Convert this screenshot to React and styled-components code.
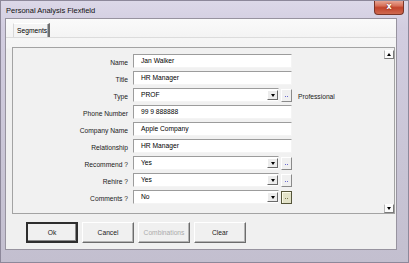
import React from "react";
import styled, { createGlobalStyle } from "styled-components";

const Global = createGlobalStyle`
  html, body { margin: 0; padding: 0; background: #ffffff; }
  body { font-family: "Liberation Sans", Arial, sans-serif; }
  * { box-sizing: border-box; }
`;

const Window = styled.div`
  width: 409px;
  height: 263px;
  display: flex;
  flex-direction: column;
  background: linear-gradient(180deg, #dcd8e8 0%, #d2cde0 10%, #c9c5d6 60%, #c3bfcf 100%);
  border: 1px solid #8d889a;
  overflow: hidden;
`;

const TitleBar = styled.div`
  height: 17px;
  display: flex;
  align-items: flex-start;
  justify-content: space-between;
  padding: 0 4px 0 5px;
`;

const Title = styled.span`
  font-size: 7.5px;
  line-height: 19px;
  color: #111;
`;

const CloseButton = styled.div`
  width: 30px;
  height: 15px;
  margin-top: -1px;
  display: flex;
  align-items: center;
  justify-content: center;
  border: 1px solid #7a3528;
  border-top: none;
  border-radius: 0 0 4px 4px;
  background: linear-gradient(180deg, #eab0a0 0%, #d8735c 40%, #c2442c 55%, #cf6a50 100%);
  color: #fff;
  font-family: "DejaVu Sans", sans-serif;
  font-weight: bold;
  font-size: 8px;
  line-height: 1;
  text-shadow: 0 0 2px #6a1a10;
`;

const Client = styled.div`
  flex: 1;
  margin: 0 11px 12px 4px;
  border: 1px solid #97939f;
  background: #f0f0f0;
  display: flex;
  flex-direction: column;
`;

const TabStrip = styled.div`
  display: flex;
  padding: 4px 0 0 7px;
  background: linear-gradient(180deg, #fafafa, #f4f4f4);
`;

const Tab = styled.div`
  height: 14px;
  width: 37px;
  padding-left: 3px;
  font-size: 6.7px;
  line-height: 13px;
  color: #000;
  background: #f4f4f4;
  border-top: 1px solid #ffffff;
  border-left: 1px solid #d8d8d8;
  border-right: 2px solid #6e6e6e;
  box-shadow: inset -1px 0 0 #b0b0b0;
`;

const TabPage = styled.div`
  flex: 1;
  display: flex;
  flex-direction: column;
  border-top: 1px solid #dcdcdc;
  background: linear-gradient(180deg, #f6f6f6 0px, #f4f4f4 10px, #f0f0f0 11px);
`;

const Panel = styled.div`
  margin: 9px 1px 0 6px;
  height: 167px;
  border: 1px solid #a3a3a3;
  background: #f1f1f1;
  display: flex;
`;

const Form = styled.div`
  flex: 1;
  display: flex;
  flex-direction: column;
  gap: 3px;
  padding-top: 6px;
`;

const Row = styled.div`
  display: flex;
  align-items: center;
  height: 14px;
`;

const Label = styled.div`
  width: 120px;
  padding-right: 5px;
  padding-top: 3px;
  text-align: right;
  font-size: 6.7px;
  color: #1a1a1a;
`;

const Field = styled.div`
  position: relative;
  width: ${(p) => (p.$combo ? 146 : 159)}px;
  height: 14px;
  padding-left: 7px;
  background: #ffffff;
  border-top: 1px solid #9c9c9c;
  border-left: 1px solid #9c9c9c;
  border-right: 1px solid #f4f4f4;
  border-bottom: 1px solid #f4f4f4;
  font-size: 6.7px;
  line-height: 12px;
  color: #000;
`;

const DropArrow = styled.div`
  position: absolute;
  right: 0;
  top: 1px;
  width: 11px;
  height: 10px;
  background: #ececec;
  border-top: 1px solid #fff;
  border-left: 1px solid #fff;
  border-right: 1px solid #6a6a6a;
  border-bottom: 1px solid #6a6a6a;
  display: flex;
  align-items: center;
  justify-content: center;
`;

const Tri = styled.div`
  width: 0;
  height: 0;
  border-left: 2.5px solid transparent;
  border-right: 2.5px solid transparent;
  ${(p) => (p.$up ? "border-bottom: 3px solid #000;" : "border-top: 3px solid #000;")}
`;

const Ellipsis = styled.div`
  margin-left: 2px;
  width: 11px;
  height: 13px;
  display: flex;
  align-items: center;
  justify-content: center;
  gap: 1px;
  background: ${(p) => (p.$focus ? "#e2e2c8" : "#f0f0f0")};
  border: 1px solid;
  border-color: ${(p) =>
    p.$focus ? "#55553a" : "#ffffff #8a8a8a #8a8a8a #ffffff"};
  box-shadow: ${(p) => (p.$focus ? "inset 1px 1px 0 #fafae8" : "none")};
`;

const Dot = styled.span`
  width: 1px;
  height: 1px;
  margin-top: 3px;
  background: ${(p) => (p.$focus ? "#7a7a50" : "#6a6ad0")};
`;

const Note = styled.span`
  margin-left: 6px;
  font-size: 6.7px;
  color: #1a1a1a;
  padding-top: 2px;
`;

const ScrollBar = styled.div`
  width: 11px;
  display: flex;
  flex-direction: column;
  justify-content: space-between;
  align-items: flex-end;
  padding-top: 2px;
`;

const ScrollArrow = styled.div`
  width: 10px;
  height: 9px;
  background: #fbfbfb;
  border-top: 1px solid #fff;
  border-left: 1px solid #b8b8b8;
  border-right: 1px solid #7a7a7a;
  border-bottom: 1px solid #7a7a7a;
  display: flex;
  align-items: center;
  justify-content: center;
`;

const Buttons = styled.div`
  display: flex;
  gap: 4px;
  margin-top: 8px;
  padding-left: 20px;
`;

const Button = styled.div`
  width: 52px;
  height: 21px;
  display: flex;
  align-items: center;
  justify-content: center;
  font-size: 6.7px;
  color: ${(p) => (p.$disabled ? "#ababab" : "#1a1a1a")};
  background: #f0f0f0;
  border: ${(p) => (p.$default ? "2px solid #2e2e2e" : "1px solid")};
  border-color: ${(p) =>
    p.$default ? "#2e2e2e" : "#ffffff #6c6c6c #6c6c6c #ffffff"};
  box-shadow: ${(p) =>
    p.$default ? "inset -1px -1px 0 #8a8a8a" : "inset -1px -1px 0 #b4b4b4"};
`;

const rows = [
  { label: "Name", value: "Jan Walker" },
  { label: "Title", value: "HR Manager" },
  { label: "Type", value: "PROF", combo: true, note: "Professional" },
  { label: "Phone Number", value: "99 9 888888" },
  { label: "Company Name", value: "Apple Company" },
  { label: "Relationship", value: "HR Manager" },
  { label: "Recommend ?", value: "Yes", combo: true },
  { label: "Rehire ?", value: "Yes", combo: true },
  { label: "Comments ?", value: "No", combo: true, focus: true },
];

export default function App() {
  return (
    <>
      <Global />
      <Window>
        <TitleBar>
          <Title>Personal Analysis Flexfield</Title>
          <CloseButton>x</CloseButton>
        </TitleBar>
        <Client>
          <TabStrip>
            <Tab>Segments</Tab>
          </TabStrip>
          <TabPage>
            <Panel>
              <Form>
                {rows.map((r) => (
                  <Row key={r.label}>
                    <Label>{r.label}</Label>
                    <Field $combo={r.combo}>
                      {r.value}
                      {r.combo && (
                        <DropArrow>
                          <Tri />
                        </DropArrow>
                      )}
                    </Field>
                    {r.combo && (
                      <Ellipsis $focus={r.focus}>
                        <Dot $focus={r.focus} />
                        <Dot $focus={r.focus} />
                      </Ellipsis>
                    )}
                    {r.note && <Note>{r.note}</Note>}
                  </Row>
                ))}
              </Form>
              <ScrollBar>
                <ScrollArrow>
                  <Tri $up />
                </ScrollArrow>
                <ScrollArrow>
                  <Tri />
                </ScrollArrow>
              </ScrollBar>
            </Panel>
            <Buttons>
              <Button $default>Ok</Button>
              <Button>Cancel</Button>
              <Button $disabled>Combinations</Button>
              <Button>Clear</Button>
            </Buttons>
          </TabPage>
        </Client>
      </Window>
    </>
  );
}
